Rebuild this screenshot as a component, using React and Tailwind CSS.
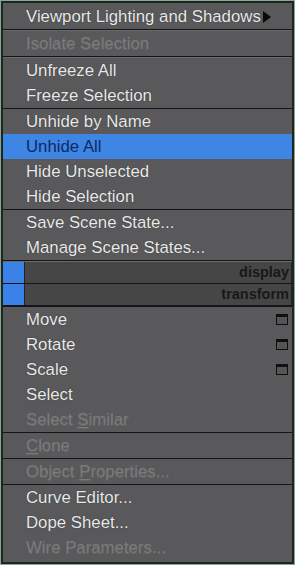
import React from "react";

// 右鍵選單內容
const menu = [
  { type: "item", label: "Viewport Lighting and Shadows", submenu: true },
  { type: "sep", thick: true },
  { type: "item", label: "Isolate Selection", disabled: true },
  { type: "sep", thick: true },
  { type: "item", label: "Unfreeze All" },
  { type: "item", label: "Freeze Selection" },
  { type: "sep" },
  { type: "item", label: "Unhide by Name" },
  { type: "item", label: "Unhide All", active: true },
  { type: "item", label: "Hide Unselected" },
  { type: "item", label: "Hide Selection" },
  { type: "sep" },
  { type: "item", label: "Save Scene State..." },
  { type: "item", label: "Manage Scene States..." },
  { type: "sep", thick: true },
  { type: "header", label: "display" },
  { type: "header", label: "transform" },
  { type: "sep" },
  { type: "item", label: "Move", option: true },
  { type: "item", label: "Rotate", option: true },
  { type: "item", label: "Scale", option: true },
  { type: "item", label: "Select" },
  { type: "item", label: "Select Similar", disabled: true, mnemonic: 7 },
  { type: "sep" },
  { type: "item", label: "Clone", disabled: true, mnemonic: 0 },
  { type: "sep" },
  { type: "item", label: "Object Properties...", disabled: true, mnemonic: 7 },
  { type: "sep" },
  { type: "item", label: "Curve Editor..." },
  { type: "item", label: "Dope Sheet..." },
  { type: "item", label: "Wire Parameters...", disabled: true },
];

const Label = ({ text, mnemonic }) => {
  if (mnemonic === undefined) return text;
  return (
    <>
      {text.slice(0, mnemonic)}
      <span className="underline underline-offset-2">{text[mnemonic]}</span>
      {text.slice(mnemonic + 1)}
    </>
  );
};

const MenuItem = ({ item }) => {
  const color = item.active
    ? "bg-[#3f85e4] text-[#0e2a62]"
    : item.disabled
    ? "text-[#7a7a7a] [text-shadow:0_1px_0_#666]"
    : "text-[#e9e9e9] [text-shadow:0_0_1px_#222]";

  return (
    <div className={`h-[25px] flex items-center pl-[23px] pr-[4px] leading-[25px] ${color}`}>
      <span className="whitespace-nowrap">
        <Label text={item.label} mnemonic={item.mnemonic} />
      </span>
      {item.submenu && (
        <svg width="8" height="12" viewBox="0 0 8 12" className="ml-[2px] shrink-0">
          <path d="M0 0 L8 6 L0 12 Z" fill="#0a0a0a" />
        </svg>
      )}
      {item.option && (
        <div className="ml-auto w-[12px] h-[11px] border border-[#101010] border-t-[3px] bg-[#555] mt-[-1px]" />
      )}
    </div>
  );
};

const Header = ({ label }) => (
  <div className="h-[22px] flex border-b border-[#161616]">
    <div className="w-[21px] bg-[#3b82e8]" />
    <div className="flex-1 bg-[#464647] border-x border-[#232323] flex items-center justify-end pr-[2px] text-[14.5px] font-bold text-[#181818]">
      {label}
    </div>
  </div>
);

export default function App() {
  return (
    <div className="w-[295px] h-[565px] border border-[#86a893] bg-[#2e4a3a]">
      <div
        className="h-full border-2 border-[#1c2620] bg-[#59595b] pt-[1px] text-[16.8px]"
        style={{ fontFamily: '"Liberation Sans", Arial, sans-serif' }}
      >
        {menu.map((item, i) => {
          if (item.type === "sep")
            return item.thick ? (
              <div key={i} className="h-[2px] border-t border-[#151515] bg-[#6a6a6a]" />
            ) : (
              <div key={i} className="h-[1px] bg-[#151515]" />
            );
          if (item.type === "header") return <Header key={i} label={item.label} />;
          return <MenuItem key={i} item={item} />;
        })}
      </div>
    </div>
  );
}
